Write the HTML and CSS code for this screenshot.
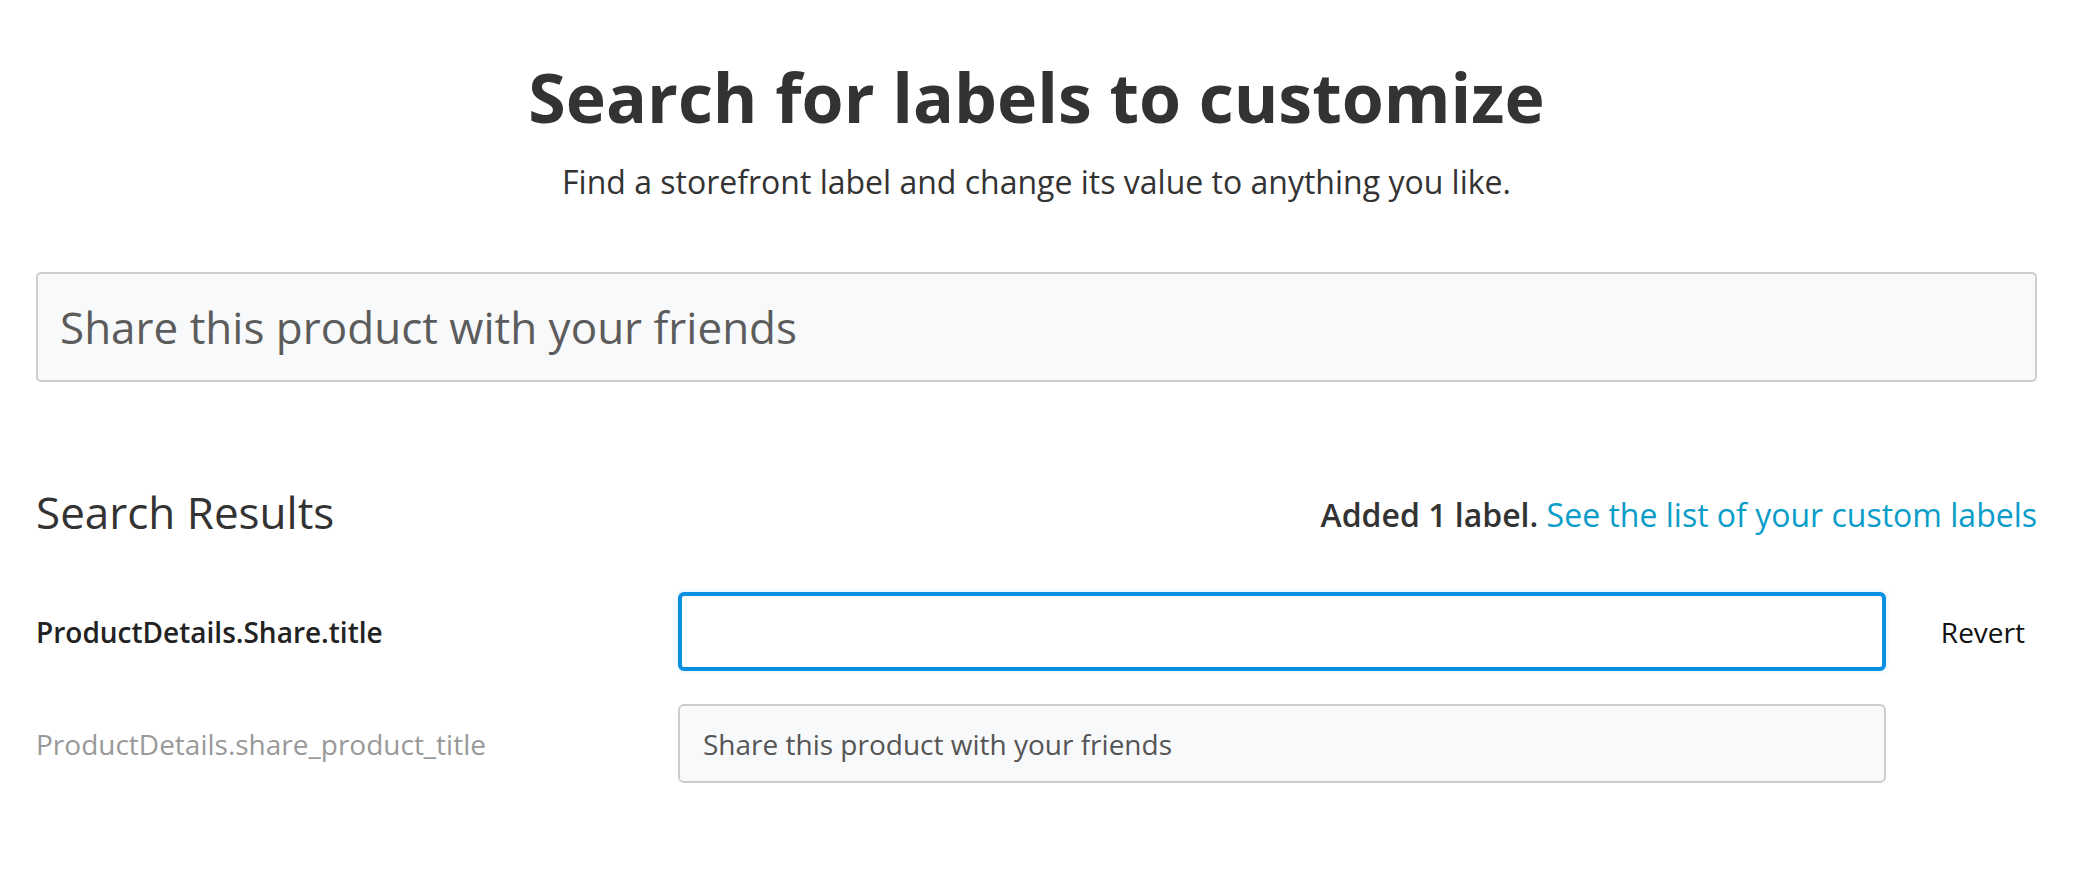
FILE: index.html
```html
<!DOCTYPE html>
<html lang="en">
<head>
<meta charset="utf-8">
<title>Search for labels to customize</title>
<link rel="stylesheet" href="styles.css">
</head>
<body>
<main class="page">
  <header class="intro">
    <h1 class="title">Search for labels to customize</h1>
    <p class="subtitle">Find a storefront label and change its value to anything you like.</p>
  </header>
  <div class="search">
    <input class="search-input" type="text" value="Share this product with your friends">
  </div>
  <section class="results">
    <div class="results-head">
      <h2 class="results-title">Search Results</h2>
      <p class="results-status"><strong>Added 1 label.</strong> <a class="link" href="#">See the list of your custom labels</a></p>
    </div>
    <div class="row">
      <div class="row-label row-label-main">ProductDetails.Share.title</div>
      <input class="row-input row-input-active" type="text" value="">
      <button class="revert" type="button">Revert</button>
    </div>
    <div class="row">
      <div class="row-label row-label-muted">ProductDetails.share_product_title</div>
      <input class="row-input row-input-readonly" type="text" value="Share this product with your friends" readonly>
      <span class="revert-space"></span>
    </div>
  </section>
</main>
</body>
</html>
```

FILE: styles.css
```css
* { box-sizing: border-box; }
html, body { margin: 0; padding: 0; background: #ffffff; }
body {
  font-family: "Open Sans", "Noto Sans", sans-serif;
  color: #333333;
}
.page {
  padding: 0 41px 0 36px;
}
.intro {
  text-align: center;
  padding-top: 54px;
}
.title {
  margin: 0;
  font-size: 68px;
  font-weight: 700;
  line-height: 86px;
  color: #333333;
}
.subtitle {
  margin: 20px 0 0;
  font-size: 32px;
  line-height: 44px;
  color: #333333;
}
.search {
  margin-top: 68px;
}
.search-input {
  display: block;
  width: 100%;
  height: 110px;
  padding: 0 22px;
  font-family: inherit;
  font-size: 44px;
  color: #5c5c5c;
  background: #f8f9fb;
  border: 2px solid #cdcdcd;
  border-radius: 5px;
  outline: none;
}
.results {
  margin-top: 100px;
}
.results-head {
  display: flex;
  justify-content: space-between;
  align-items: center;
}
.results-title {
  margin: 0;
  font-size: 44px;
  font-weight: 400;
  line-height: 60px;
  color: #333333;
}
.results-status {
  margin: 0;
  font-size: 32px;
  line-height: 44px;
  padding-top: 6px;
}
.results-status strong { font-weight: 600; color: #333333; }
.link { color: #0a9dc9; text-decoration: none; }
.row {
  display: grid;
  grid-template-columns: 642px 1216px 1fr;
  align-items: center;
  margin-top: 50px;
}
.row + .row { margin-top: 33px; }
.row-label { font-size: 28px; }
.row-label-main { font-weight: 600; color: #222222; }
.row-label-muted { color: #999999; }
.row-input {
  display: block;
  width: 1208px;
  height: 79px;
  padding: 0 23px;
  font-family: inherit;
  font-size: 28px;
  color: #555555;
  border-radius: 6px;
  outline: none;
}
.row-input-active {
  background: #ffffff;
  border: 4px solid #0a90e0;
  box-shadow: 0 0 5px rgba(10, 144, 224, 0.18);
}
.row-input-readonly {
  background: #f8f9fb;
  border: 2px solid #cdcdcd;
}
.revert {
  justify-self: end;
  margin-right: 12px;
  padding: 0;
  background: none;
  border: 0;
  font-family: inherit;
  font-size: 28px;
  color: #111111;
  cursor: pointer;
}
```
